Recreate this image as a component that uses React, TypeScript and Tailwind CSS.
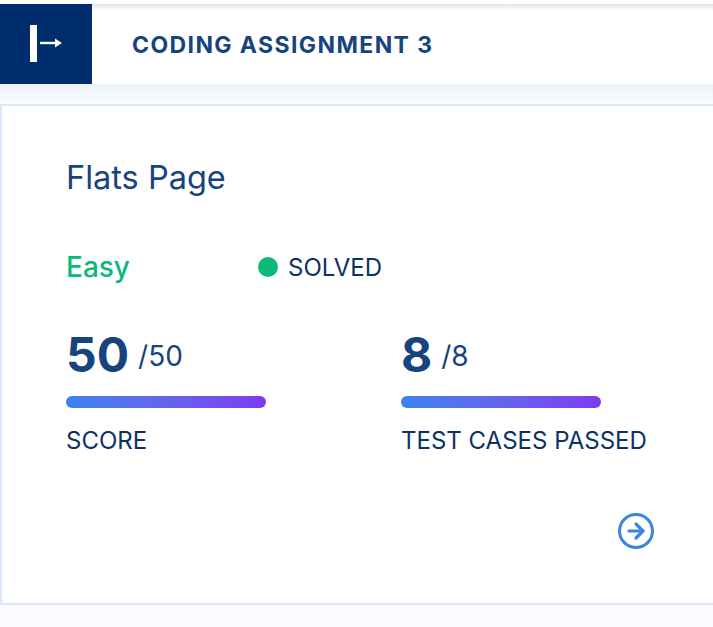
import { ArrowRight } from "lucide-react";

function Stat({ value, total, label }: { value: string; total: string; label: string }) {
  return (
    <div>
      <div className="flex items-start h-[52px]">
        <span className="text-[48px] leading-[52px] font-bold text-[#17437f]">{value}</span>
        <span className="ml-[9px] text-[28px] leading-[54px] text-[#17437f]">{total}</span>
      </div>
      <div className="mt-[15px] w-[200px] h-3 rounded-md bg-gradient-to-r from-[#3b82ee] to-[#7c3aed]" />
      <div className="mt-[19px] text-[24px] leading-7 text-[#0c3264]">{label}</div>
    </div>
  );
}

export default function App() {
  return (
    <div className="h-[627px] w-[713px] overflow-hidden bg-[#f9fbff] font-['Inter',sans-serif]">
      <div className="h-1 bg-white" />
      <header className="relative flex h-20 items-center bg-white">
        <div className="pointer-events-none absolute inset-x-0 top-0 h-[7px] bg-gradient-to-b from-[#e3e4e8] to-white" />
        <div className="relative flex h-20 w-[92px] items-center justify-center bg-[#002d6d]">
          <svg width="36" height="40" viewBox="0 0 36 40" fill="none">
            <rect x="2" y="1" width="7" height="37" fill="#fff" />
            <path d="M12 19h17" stroke="#fff" strokeWidth="2.4" />
            <path d="M27 14.5l7 4.5-7 4.5z" fill="#fff" />
          </svg>
        </div>
        <h1 className="ml-10 pt-[2px] text-[23px] font-bold tracking-[1.4px] text-[#17437f]">CODING ASSIGNMENT 3</h1>
      </header>
      <div className="h-5 bg-gradient-to-b from-[#eef2fa] to-[#f9fbff]" />
      <main className="h-[501px] w-[720px] border-2 border-[#dbe8fb] bg-white pl-[64px] pt-[52px]">
        <h2 className="text-[32.5px] leading-[40px] text-[#17437f]">Flats Page</h2>
        <div className="mt-[49px] flex items-center h-10">
          <span className="w-[192px] text-[28px] font-medium text-[#0bb97a]">Easy</span>
          <span className="h-5 w-5 rounded-full bg-[#0bb97a]" />
          <span className="ml-[10px] pt-[2px] text-[24px] text-[#0c3264]">SOLVED</span>
        </div>
        <div className="mt-[42px] flex gap-[135px]">
          <Stat value="50" total="/50" label="SCORE" />
          <Stat value="8" total="/8" label="TEST CASES PASSED" />
        </div>
        <div className="mt-[58px] ml-[552px] flex h-9 w-9 items-center justify-center rounded-full border-[3px] border-[#3b87e0] text-[#3b87e0]">
          <ArrowRight size={24} strokeWidth={3.2} />
        </div>
      </main>
    </div>
  );
}
